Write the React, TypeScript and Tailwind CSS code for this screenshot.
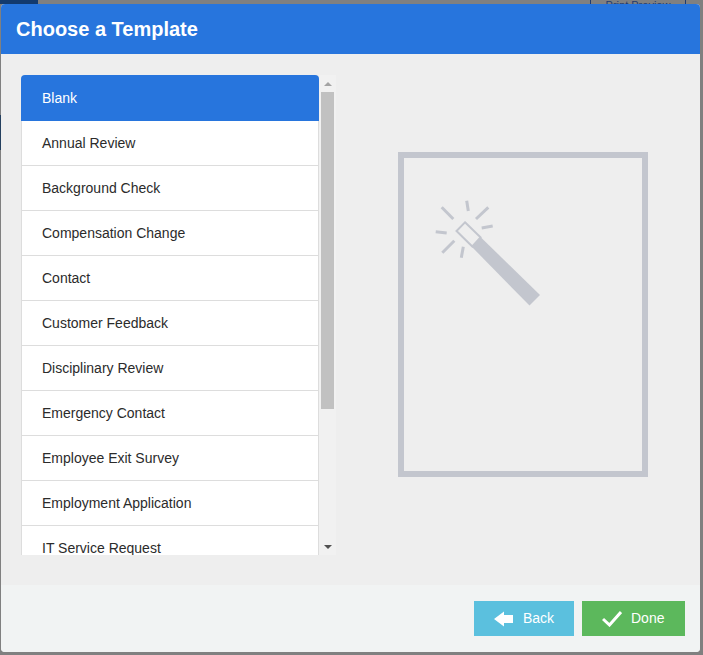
import React from 'react';

const templates = [
  'Blank',
  'Annual Review',
  'Background Check',
  'Compensation Change',
  'Contact',
  'Customer Feedback',
  'Disciplinary Review',
  'Emergency Contact',
  'Employee Exit Survey',
  'Employment Application',
  'IT Service Request',
];

const WandIcon: React.FC = () => (
  // coordinates are page pixels, hence the offset viewBox
  <svg width="110" height="110" viewBox="435 200 110 110" fill="none">
    <polygon points="480,236.5 540,295 529.5,305.5 471.5,246.5" fill="#c3c6ce" />
    <polygon points="465,222.3 480.5,237.3 472.3,246.5 456.5,231" fill="#eeeeee" stroke="#c3c6ce" strokeWidth="2" />
    <g stroke="#c3c6ce" strokeWidth="3">
      <line x1="441.7" y1="207.3" x2="453.3" y2="219" />
      <line x1="466.7" y1="200.7" x2="468.3" y2="211" />
      <line x1="488.3" y1="207.3" x2="476" y2="219" />
      <line x1="492.7" y1="226" x2="481.7" y2="228" />
      <line x1="435.7" y1="231.7" x2="446.7" y2="233" />
      <line x1="454.3" y1="240.7" x2="442.3" y2="252.7" />
      <line x1="463.3" y1="246.7" x2="461.3" y2="257.7" />
    </g>
  </svg>
);

const App: React.FC = () => {
  return (
    <div className="w-[703px] h-[655px] overflow-hidden flex flex-col bg-[#808080] font-['Liberation_Sans',Arial,sans-serif]">
      {/* page behind the modal */}
      <div className="h-[4px] flex shrink-0 overflow-hidden">
        <div className="w-[38px] bg-[#123a6e]" />
        <div className="ml-[552px] w-[96px] h-[20px] border-x border-[#1f3a6e] text-center text-[11px] leading-[11px] text-[#1f3a6e]">
          Print Preview
        </div>
      </div>

      <div className="flex flex-1 min-h-0">
        <div className="w-[1px] flex flex-col">
          <div className="h-[111px]" />
          <div className="h-[35px] bg-[#24405f]" />
        </div>

        {/* modal */}
        <div className="w-[699px] h-[648px] rounded-[4px] overflow-hidden flex flex-col bg-[#eeeeee]">
          <div className="h-[50px] shrink-0 bg-[#2775dd] pl-[15px] flex items-center">
            <h1 className="text-[20px] font-bold text-white">Choose a Template</h1>
          </div>

          <div className="flex-1 min-h-0 flex pt-[21px] pl-[20px]">
            <div className="w-[315px] h-[480px] flex overflow-hidden">
              <div className="w-[298px] h-full overflow-hidden">
                {templates.map((name, i) =>
                  i === 0 ? (
                    <div
                      key={name}
                      className="h-[46px] rounded-t-[4px] bg-[#2775dd] pl-[21px] flex items-center text-[14px] text-white"
                    >
                      {name}
                    </div>
                  ) : (
                    <div
                      key={name}
                      className="h-[45px] bg-white border-x border-b border-[#dddddd] pl-[20px] flex items-center text-[14px] text-[#2b2b2b]"
                    >
                      {name}
                    </div>
                  )
                )}
              </div>

              {/* scrollbar */}
              <div className="w-[17px] h-full bg-[#f1f1f1] flex flex-col items-center">
                <div className="h-[17px] flex items-center justify-center shrink-0">
                  <div className="w-0 h-0 border-x-[4px] border-x-transparent border-b-[4px] border-b-[#a3a3a3]" />
                </div>
                <div className="w-[13px] h-[317px] bg-[#c1c1c1] shrink-0" />
                <div className="flex-1" />
                <div className="h-[17px] flex items-center justify-center shrink-0">
                  <div className="w-0 h-0 border-x-[4px] border-x-transparent border-t-[4px] border-t-[#505050]" />
                </div>
              </div>
            </div>

            {/* preview */}
            <div className="ml-[62px] mt-[77px] w-[250px] h-[325px] border-[6px] border-[#c3c6ce] pl-[31px] pt-[42px]">
              <WandIcon />
            </div>
          </div>

          <div className="h-[67px] shrink-0 bg-[#f1f3f3] flex justify-end gap-[8px] pr-[15px] pt-[16px]">
            <button className="w-[100px] h-[35px] bg-[#5bc0de] text-white text-[14px] flex items-center pl-[20px]">
              <svg width="19" height="16" viewBox="0 0 19 16" className="mr-[10px]">
                <polygon points="0,8 10,0.5 10,4 19,4 19,12 10,12 10,15.5" fill="#ffffff" />
              </svg>
              Back
            </button>
            <button className="w-[103px] h-[35px] bg-[#5cb85c] text-white text-[14px] flex items-center pl-[20px]">
              <svg width="20" height="16" viewBox="0 0 20 16" fill="none" className="mr-[9px]">
                <path d="M1 8 L7.5 14 L19 1" stroke="#ffffff" strokeWidth="3" />
              </svg>
              Done
            </button>
          </div>
        </div>
      </div>
    </div>
  );
};

export default App;
